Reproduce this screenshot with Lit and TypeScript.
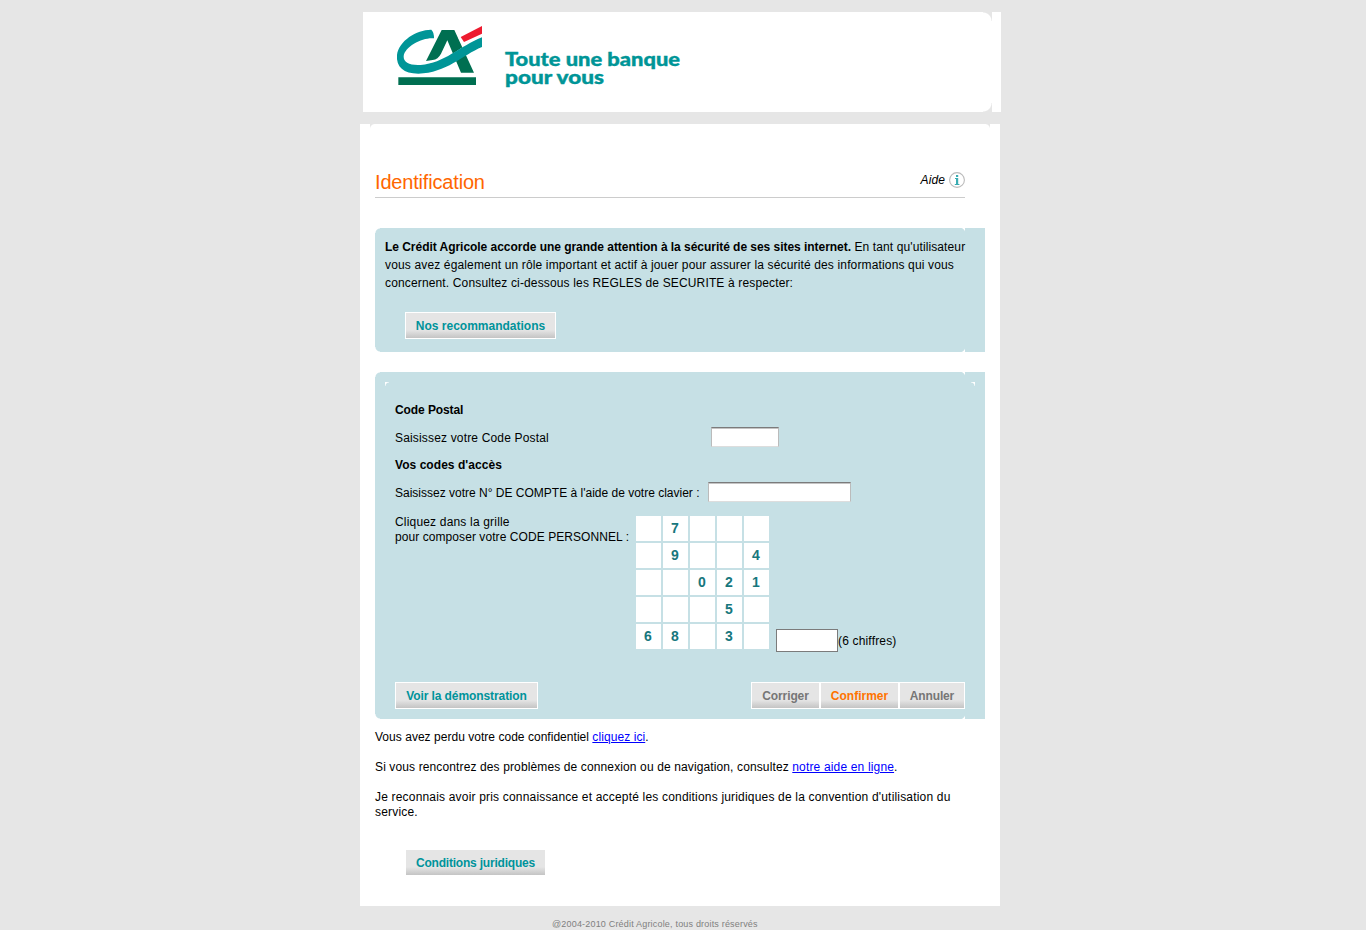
import { LitElement, html, css, svg } from "lit";
import { customElement } from "lit/decorators.js";

const GRID = [
  ["", "7", "", "", ""],
  ["", "9", "", "", "4"],
  ["", "", "0", "2", "1"],
  ["", "", "", "5", ""],
  ["6", "8", "", "3", ""],
];

const logo = svg`
  <path fill="#006f51" d="M155 30H193L252 158H213L172 61L153 101Q144 118 128 120L108 123Z"/>
  <path fill="none" stroke="#fff" stroke-width="5" d="M100 137C170 131 215 78 276 51"/>
  <path fill="#fff" d="M204 53L219 73L280 48V38L223 66Z"/>
  <path fill="#009597" d="M124 29Q132 36 132 55C100 51 44 78 41 109C40 128 60 137 92 135C163 130 208 79 276 52V81C218 105 169 159 85 161C41 161 18 141 21 105C26 62 82 28 124 29Z"/>
  <path fill="#ed1b2f" d="M212 51L276 18V41L222 66Z"/>
  <path fill="#006f51" d="M25 172H258V195H25Z"/>
`;

@customElement("app-root")
export class AppRoot extends LitElement {
  static styles = css`
    :host { display: block; height: 930px; overflow: hidden; background: #e6e6e6; color: #000; font: 12px/15px "Liberation Sans", Arial, sans-serif; }
    * { box-sizing: border-box; }
    .page { width: 646px; margin-left: 360px; padding-top: 12px; }
    .header { display: flex; gap: 23px; width: 638px; height: 100px; margin: 0 0 12px 3px; padding: 8px 0 0 27px;
      background:
        radial-gradient(circle at 0 100%, transparent 8px, #e6e6e6 9px) 620px 0/9px 9px no-repeat,
        radial-gradient(circle at 0 0, transparent 8px, #e6e6e6 9px) 620px 91px/9px 9px no-repeat, #fff; }
    .mark { width: 100px; height: 70px; display: block; }
    .slogan { width: 210px; height: 74px; display: block; margin-left: -12px; font: 900 19px Lato, sans-serif; fill: #009597; stroke: #009597; stroke-width: 0.4px; }
    .main { width: 640px; height: 782px; padding: 46px 15px 0;
      background:
        radial-gradient(circle at 100% 100%, transparent 4.5px, #e6e6e6 5.5px) 10px 0/5px 5px no-repeat,
        radial-gradient(circle at 0 100%, transparent 4.5px, #e6e6e6 5.5px) 625px 0/5px 5px no-repeat, #fff; }
    .title { display: flex; justify-content: space-between; width: 590px; height: 28px; border-bottom: 1px solid #ccc; }
    h1 { margin: 0; color: #f60; font-size: 20px; line-height: 24px; font-weight: normal; letter-spacing: -0.18px; }
    .help { display: flex; gap: 4px; font-style: italic; line-height: 20px; letter-spacing: 0.1px; }
    .info { width: 16px; height: 16px; margin-top: 2px; }
    .panel { width: 610px;
      --n1: radial-gradient(circle at 100% 100%, transparent 4px, #fff 5px);
      --n2: radial-gradient(circle at 0 100%, transparent 4.7px, #fff 5.7px);
      --n3: radial-gradient(circle at 100% 0, transparent 4px, #fff 5px);
      --n4: radial-gradient(circle at 0 0, transparent 4.7px, #fff 5.7px);
      background: var(--n1) 0 0/5px 5px no-repeat, var(--n2) 585px 0/5px 5px no-repeat,
        var(--n3) 0 100%/5px 5px no-repeat, var(--n4) 585px 100%/5px 5px no-repeat, #c6e0e5; }
    .notice { height: 124px; margin-top: 30px; padding: 10px 10px 0; line-height: 18px; white-space: nowrap; }
    .notice .btn { margin: 20px 0 0 20px; }
    .form { height: 347px; margin-top: 20px; padding: 31px 20px 0;
      background: var(--n1) 0 0/5px 5px no-repeat, var(--n2) 585px 0/5px 5px no-repeat,
        var(--n3) 0 100%/5px 5px no-repeat, var(--n4) 585px 100%/5px 5px no-repeat,
        radial-gradient(circle at 100% 100%, transparent 3px, #fff 4px) 10px 10px/4px 4px no-repeat,
        radial-gradient(circle at 0 100%, transparent 3px, #fff 4px) 596px 10px/4px 4px no-repeat, #c6e0e5; }
    .row { display: flex; white-space: nowrap; }
    .btn { display: block; width: max-content; height: 27px; padding: 1px 0 0; border: 1px solid #fff; font: bold 12px/24px "Liberation Sans", Arial, sans-serif;
      color: #00939b; text-align: center; background: linear-gradient(#e5e5e5 68%, #c4c4c4); }
    .w151 { width: 151px; } .w143 { width: 143px; letter-spacing: -0.09px; } .w141 { width: 141px; letter-spacing: -0.2px; }
    .w69 { width: 69px; letter-spacing: -0.1px; } .w79 { width: 79px; } .w66 { width: 66px; letter-spacing: -0.15px; }
    .gray { color: #767676; } .orange { color: #ff7300; }
    .b1 { letter-spacing: -0.09px; }
    .postal { margin-top: 9px; } .codes { margin: 11px 0 9px; letter-spacing: 0.05px; } .account { height: 20px; }
    input { display: block; padding: 0; border: 1px solid #bbb; border-top-color: #7b7b7b; border-bottom-color: #ddd; border-radius: 0;
      box-shadow: inset 0 1px #c4c4c4; background: #fff; height: 20px; flex: none; }
    .zip { width: 68px; } .acct { width: 143px; } .secret { width: 62px; height: 23px; border: 1px solid #7b7b7b; box-shadow: none; }
    .lab1 { width: 316px; padding-top: 4px; letter-spacing: 0.165px; } .lab2 { width: 313px; padding-top: 4px; } .lab3 { width: 241px; padding-top: 1px; }
    .f3 { letter-spacing: 0.18px; } .f4 { letter-spacing: 0.07px; }
    .pad { margin-top: 12px; height: 138px; }
    .keys { display: grid; grid-template: repeat(5, 25px) / repeat(5, 25px); gap: 2px; margin: 2px 7px 0 0; }
    .key { padding-right: 1px; background: #fff; color: #17777d; font: bold 14px/25px "Liberation Sans", Arial, sans-serif; text-align: center; }
    .digits { display: flex; align-items: center; align-self: flex-end; height: 23px; letter-spacing: 0.17px; }
    .digits span { padding-top: 2px; }
    .actions { width: 570px; margin-top: 30px; justify-content: space-between; }
    .group { display: flex; }
    p { margin: 0 0 15px; width: 600px; } .first { margin-top: 11px; letter-spacing: 0.03px; }
    a { color: #00f; }
    .n1 b { letter-spacing: -0.036px; } .n1 { letter-spacing: 0.11px; } .n2, .n3 { letter-spacing: 0.146px; }
    .first a { letter-spacing: 0.08px; }
    .p2 { letter-spacing: 0.122px; } .p2 a { letter-spacing: 0.16px; } .p3 { letter-spacing: 0.183px; }
    .legal { margin: 29px 0 0 30px; }
    .footer { margin: 12px 0 0 192px; font-size: 9px; line-height: 12px; color: #808080; white-space: nowrap; letter-spacing: 0.187px; }
  `;

  render() {
    return html`
      <div class="page">
        <header class="header">
          <svg class="mark" viewBox="0 0 300 210">${logo}</svg>
          <svg class="slogan" viewBox="0 0 210 74">
            <text x="4" y="46" textLength="175" lengthAdjust="spacingAndGlyphs">Toute une banque</text>
            <text x="4" y="64" textLength="99" lengthAdjust="spacingAndGlyphs">pour vous</text>
          </svg>
        </header>
        <main class="main">
          <div class="title">
            <h1>Identification</h1>
            <div class="help"><span>Aide</span>
              <svg class="info" viewBox="0 0 16 16">
                <circle cx="8" cy="8" r="7.4" fill="#fff" stroke="#bbb" stroke-width="1.1"/>
                <path fill="#3aacb2" d="M7 3h2.2v2H7zM6 6h3.2v6h1.2v1.1H5.8V12H7V7.1H6z"/>
              </svg>
            </div>
          </div>
          <section class="panel notice">
            <div class="n1"><b>Le Crédit Agricole accorde une grande attention à la sécurité de ses sites internet.</b> En tant qu'utilisateur</div>
            <div class="n2">vous avez également un rôle important et actif à jouer pour assurer la sécurité des informations qui vous</div>
            <div class="n3">concernent. Consultez ci-dessous les REGLES de SECURITE à respecter:</div>
            <button class="btn w151">Nos recommandations</button>
          </section>
          <section class="panel form">
            <b class="row b1">Code Postal</b>
            <div class="row postal"><span class="lab1">Saisissez votre Code Postal</span><input class="zip"></div>
            <b class="row codes">Vos codes d'accès</b>
            <div class="row account"><span class="lab2">Saisissez votre N° DE COMPTE à l'aide de votre clavier :</span><input class="acct"></div>
            <div class="row pad">
              <span class="lab3"><span class="f3">Cliquez dans la grille</span><br><span class="f4">pour composer votre CODE PERSONNEL :</span></span>
              <div class="keys">${GRID.flat().map((d) => html`<span class="key">${d}</span>`)}</div>
              <div class="digits"><input class="secret"><span>(6 chiffres)</span></div>
            </div>
            <div class="row actions">
              <button class="btn w143">Voir la démonstration</button>
              <div class="group">
                <button class="btn gray w69">Corriger</button>
                <button class="btn orange w79">Confirmer</button>
                <button class="btn gray w66">Annuler</button>
              </div>
            </div>
          </section>
          <p class="first">Vous avez perdu votre code confidentiel <a href="#">cliquez ici</a>.</p>
          <p class="p2">Si vous rencontrez des problèmes de connexion ou de navigation, consultez <a href="#">notre aide en ligne</a>.</p>
          <p class="p3">Je reconnais avoir pris connaissance et accepté les conditions juridiques de la convention d'utilisation du<br>service.</p>
          <button class="btn w141 legal">Conditions juridiques</button>
        </main>
        <footer class="footer">@2004-2010 Crédit Agricole, tous droits réservés</footer>
      </div>
    `;
  }
}
